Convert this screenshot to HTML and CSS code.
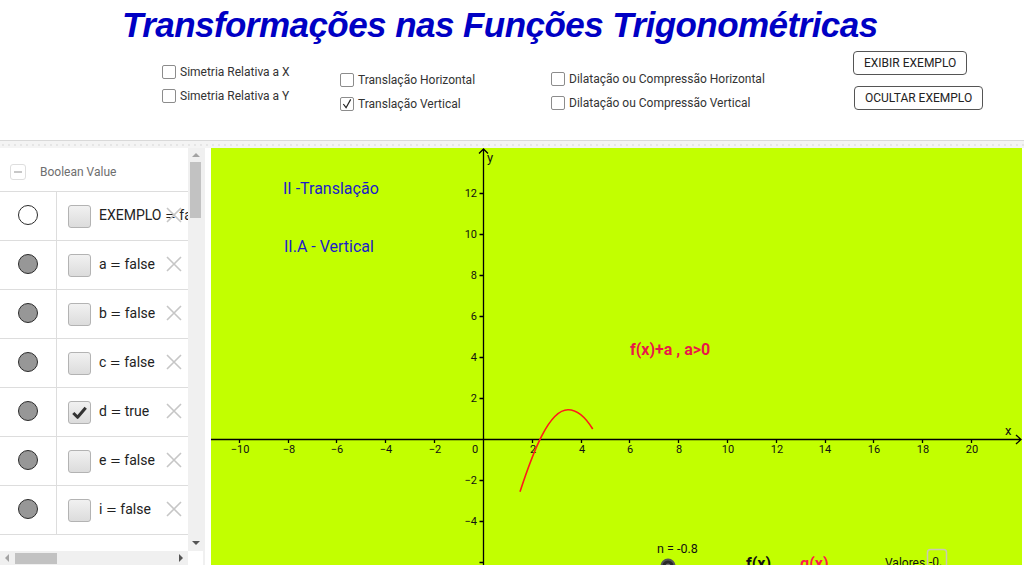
FILE: index.html
```html
<!DOCTYPE html>
<html lang="pt">
<head>
<meta charset="utf-8">
<title>Transformações nas Funções Trigonométricas</title>
<link rel="stylesheet" href="styles.css">
</head>
<body>
<div class="app">
  <header class="top">
    <h1 class="title">Transformações nas Funções Trigonométricas</h1>
    <div class="controls">
      <div class="col col1">
        <label class="cb"><span class="box"></span>Simetria Relativa a X</label>
        <label class="cb"><span class="box"></span>Simetria Relativa a Y</label>
      </div>
      <div class="col col2">
        <label class="cb"><span class="box"></span>Translação Horizontal</label>
        <label class="cb"><span class="box"><svg viewBox="0 0 13 13" class="tick"><path d="M2.5 6.5 L5.5 10.5 L10.5 1.5"/></svg></span>Translação Vertical</label>
      </div>
      <div class="col col3">
        <label class="cb"><span class="box"></span>Dilatação ou Compressão Horizontal</label>
        <label class="cb"><span class="box"></span>Dilatação ou Compressão Vertical</label>
      </div>
      <div class="col col4">
        <button class="btn">EXIBIR EXEMPLO</button>
        <button class="btn">OCULTAR EXEMPLO</button>
      </div>
    </div>
  </header>
  <div class="strip"></div>
  <main class="main">
    <aside class="algebra">
      <div class="av-body">
        <div class="av-list">
          <div class="av-head"><span class="collapse"></span><span class="av-title">Boolean Value</span></div>
          <div class="row"><div class="cell-dot"><span class="dot empty"></span></div><div class="cell-main"><span class="chk"></span><span class="lbl">EXEMPLO <span class="eq">=</span> false</span><svg class="del" viewBox="0 0 16 16"><path d="M1 1 L15 15 M15 1 L1 15"/></svg></div></div>
          <div class="row"><div class="cell-dot"><span class="dot"></span></div><div class="cell-main"><span class="chk"></span><span class="lbl">a <span class="eq">=</span> false</span><svg class="del" viewBox="0 0 16 16"><path d="M1 1 L15 15 M15 1 L1 15"/></svg></div></div>
          <div class="row"><div class="cell-dot"><span class="dot"></span></div><div class="cell-main"><span class="chk"></span><span class="lbl">b <span class="eq">=</span> false</span><svg class="del" viewBox="0 0 16 16"><path d="M1 1 L15 15 M15 1 L1 15"/></svg></div></div>
          <div class="row"><div class="cell-dot"><span class="dot"></span></div><div class="cell-main"><span class="chk"></span><span class="lbl">c <span class="eq">=</span> false</span><svg class="del" viewBox="0 0 16 16"><path d="M1 1 L15 15 M15 1 L1 15"/></svg></div></div>
          <div class="row"><div class="cell-dot"><span class="dot"></span></div><div class="cell-main"><span class="chk"><svg class="chk-mark" viewBox="0 0 22 22"><path d="M4.5 11.5 L9 16 L17.5 6"/></svg></span><span class="lbl">d <span class="eq">=</span> true</span><svg class="del" viewBox="0 0 16 16"><path d="M1 1 L15 15 M15 1 L1 15"/></svg></div></div>
          <div class="row"><div class="cell-dot"><span class="dot"></span></div><div class="cell-main"><span class="chk"></span><span class="lbl">e <span class="eq">=</span> false</span><svg class="del" viewBox="0 0 16 16"><path d="M1 1 L15 15 M15 1 L1 15"/></svg></div></div>
          <div class="row"><div class="cell-dot"><span class="dot"></span></div><div class="cell-main"><span class="chk"></span><span class="lbl">i <span class="eq">=</span> false</span><svg class="del" viewBox="0 0 16 16"><path d="M1 1 L15 15 M15 1 L1 15"/></svg></div></div>
        </div>
        <div class="vscroll"><span class="arr-up"></span><span class="vthumb"></span><span class="arr-down"></span></div>
      </div>
      <div class="hbar">
        <div class="hscroll"><span class="arr-left"></span><span class="hthumb"></span><span class="arr-right"></span></div>
        <div class="corner"></div>
      </div>
    </aside>
    <div class="splitter"></div>
    <section class="graphics">
      <svg class="plot" width="811" height="417" viewBox="211 148 811 417">
        <g class="axes">
          <path d="M211 439.5 H1021 M1016 435 L1021 439.5 L1016 444"/>
          <path d="M483.5 565 V149 M479 153.5 L483.5 149 L488 153.5"/>
          <path d="M239.5 439.5 V443 M288.5 439.5 V443 M336.5 439.5 V443 M385.5 439.5 V443 M434.5 439.5 V443 M532.5 439.5 V443 M581.5 439.5 V443 M629.5 439.5 V443 M678.5 439.5 V443 M727.5 439.5 V443 M776.5 439.5 V443 M825.5 439.5 V443 M873.5 439.5 V443 M922.5 439.5 V443 M971.5 439.5 V443"/>
          <path d="M479.5 193.5 H483.5 M479.5 234.5 H483.5 M479.5 275.5 H483.5 M479.5 316.5 H483.5 M479.5 357.5 H483.5 M479.5 398.5 H483.5 M479.5 480.5 H483.5 M479.5 521.5 H483.5 M479.5 562.5 H483.5"/>
        </g>
        <g class="xlab">
          <text x="240" y="453">−10</text>
          <text x="289" y="453">−8</text>
          <text x="337" y="453">−6</text>
          <text x="386" y="453">−4</text>
          <text x="435" y="453">−2</text>
          <text x="475" y="453">0</text>
          <text x="533" y="453">2</text>
          <text x="582" y="453">4</text>
          <text x="630" y="453">6</text>
          <text x="679" y="453">8</text>
          <text x="728" y="453">10</text>
          <text x="777" y="453">12</text>
          <text x="825" y="453">14</text>
          <text x="874" y="453">16</text>
          <text x="923" y="453">18</text>
          <text x="972" y="453">20</text>
        </g>
        <g class="ylab">
          <text x="477" y="197">12</text>
          <text x="477" y="238">10</text>
          <text x="477" y="279">8</text>
          <text x="477" y="320">6</text>
          <text x="477" y="361">4</text>
          <text x="477" y="402">2</text>
          <text x="477" y="484">−2</text>
          <text x="477" y="525">−4</text>
        </g>
        <text class="axname" x="487" y="162">y</text>
        <text class="axname" x="1005" y="435">x</text>
        <path class="curve" d="M520 491.7 C533 452 549 409.7 568 409.7 C578 409.7 586 418 592.7 429"/>
        <text class="note" x="283" y="194">II -Translação</text>
        <text class="note" x="284" y="252">II.A - Vertical</text>
        <text class="red-note" x="630" y="355">f(x)+a , a&gt;0</text>
        <text class="small" x="657" y="553">n = -0.8</text>
        <circle cx="668" cy="566" r="6.5" fill="#2a2a2a" stroke="#555" stroke-width="2"/>
        <circle cx="668" cy="566" r="2.5" fill="#777"/>
        <text class="fx" x="746" y="569">f(x)</text>
        <text class="gx" x="800" y="569">g(x)</text>
        <text class="small vl" x="885" y="567">Valores</text>
        <rect x="927.5" y="549.5" width="19" height="22" rx="3" fill="none" stroke="#c9c9b4" stroke-width="1.5"/>
        <text class="small vl" x="929" y="566">-0.</text>
      </svg>
    </section>
  </main>
</div>
</body>
</html>
```

FILE: styles.css
```css
* { box-sizing: border-box; }
html, body { margin: 0; padding: 0; background: #ffffff; }
body { width: 1024px; height: 568px; overflow: hidden; font-family: Roboto, "Liberation Sans", sans-serif; }

.top { height: 141px; border-bottom: 1px solid #d9d9d9; }
.title {
  margin: 0;
  height: 50px;
  padding-left: 122px;
  font-family: "Liberation Sans", Arial, sans-serif;
  font-style: italic;
  font-weight: bold;
  font-size: 35px;
  letter-spacing: -0.55px;
  line-height: 50px;
  color: #0000c4;
  white-space: nowrap;
}
.controls { display: flex; padding-left: 162px; height: 90px; }
.col { display: flex; flex-direction: column; }
.col1 { width: 178px; padding-top: 10px; }
.col2 { width: 211px; padding-top: 18px; }
.col3 { width: 302px; padding-top: 17px; }
.col4 { padding-top: 1px; gap: 11px; align-items: flex-start; }
.cb { display: flex; align-items: center; height: 24px; gap: 4px; font-size: 12px; color: #333; white-space: nowrap; }
.box { width: 14px; height: 14px; border: 1px solid #8c8c8c; border-radius: 2px; background: #fff; display: flex; align-items: center; justify-content: center; }
.tick { width: 12px; height: 12px; fill: none; stroke: #222; stroke-width: 1.3; }
.btn {
  height: 24px; padding: 0 10px; background: #fff; border: 1.5px solid #555; border-radius: 4px;
  font-family: Roboto, sans-serif; font-size: 12px; color: #222;
}
.col4 .btn:last-child { margin-left: 1px; }

.strip {
  height: 7px;
  background-color: #f4f4f4;
  background-image: radial-gradient(circle, #dedede 0.6px, transparent 0.9px);
  background-size: 6px 6px;
  background-position: 0 1px;
}

.main { display: flex; height: 417px; }
.algebra { width: 203px; display: flex; flex-direction: column; }
.av-body { display: flex; height: 403px; }
.av-list { width: 188px; overflow: hidden; }
.av-head { height: 44px; border-bottom: 1px solid #dddddd; display: flex; align-items: center; padding-left: 10px; padding-top: 4px; }
.collapse { width: 16px; height: 16px; border: 1px solid #dedede; border-radius: 3px; display: flex; align-items: center; justify-content: center; }
.collapse::after { content: ""; width: 8px; height: 2px; background: #c8c8c8; }
.av-title { margin-left: 14px; font-size: 12px; color: #6e6e6e; }

.row { height: 49px; border-bottom: 1px solid #dddddd; display: flex; }
.cell-dot { width: 57px; border-right: 1px solid #dddddd; display: flex; align-items: center; justify-content: center; padding-right: 1px; padding-bottom: 2px; }
.dot { width: 20px; height: 20px; border-radius: 50%; background: #979797; border: 1px solid #2b2b2b; }
.dot.empty { background: #fff; }
.cell-main { display: flex; align-items: center; padding-left: 11px; }
.chk { width: 23px; height: 23px; flex: none; border: 1px solid #b3b3b3; border-radius: 3px; background: linear-gradient(#f1f1f1, #dcdcdc); display: flex; align-items: center; justify-content: center; }
.chk-mark { width: 21px; height: 21px; fill: none; stroke: #333; stroke-width: 3.2; stroke-linejoin: round; }
.lbl { margin-left: 8px; width: 67px; flex: none; white-space: nowrap; font-size: 14px; color: #222; padding-bottom: 2px; }
.eq { font-family: "DejaVu Sans", sans-serif; font-size: 13px; }
.del { width: 16px; height: 16px; flex: none; fill: none; stroke: #c6c6c6; stroke-width: 1.6; margin-bottom: 3px; }

.vscroll { width: 15px; background: #f0f0f0; display: flex; flex-direction: column; align-items: center; }
.arr-up { margin-top: 5px; width: 0; height: 0; border-left: 4px solid transparent; border-right: 4px solid transparent; border-bottom: 4px solid #a3a3a3; }
.vthumb { margin-top: 5px; width: 11px; height: 56px; background: #c2c2c2; }
.arr-down { margin-top: auto; margin-bottom: 6px; width: 0; height: 0; border-left: 4px solid transparent; border-right: 4px solid transparent; border-top: 4px solid #555; }

.hbar { display: flex; height: 14px; }
.hscroll { width: 188px; background: #f0f0f0; display: flex; align-items: center; padding: 0 5px; }
.arr-left { width: 0; height: 0; border-top: 4px solid transparent; border-bottom: 4px solid transparent; border-right: 4px solid #a3a3a3; }
.hthumb { margin-left: 6px; width: 42px; height: 11px; background: #c2c2c2; }
.arr-right { margin-left: auto; width: 0; height: 0; border-top: 4px solid transparent; border-bottom: 4px solid transparent; border-left: 4px solid #555; }
.corner { width: 15px; background: #fff; }

.splitter { width: 8px; border-left: 2px solid #f0f0f0; background: #fff; }
.graphics { width: 811px; background: #c2ff00; }
.plot { display: block; }
.axes path { fill: none; stroke: #000; stroke-width: 1.3; }
.xlab text { font-family: Roboto, sans-serif; font-size: 11px; fill: #111; text-anchor: middle; }
.ylab text { font-family: Roboto, sans-serif; font-size: 11px; fill: #111; text-anchor: end; }
.axname { font-family: Roboto, sans-serif; font-size: 13px; fill: #111; }
.curve { fill: none; stroke: #ff1a1a; stroke-width: 1.6; }
.note { font-family: Roboto, sans-serif; font-size: 16px; fill: #1c1cc8; }
.red-note { font-family: Roboto, sans-serif; font-size: 16px; font-weight: bold; fill: #ea1848; }
.small { font-family: Roboto, sans-serif; font-size: 12.5px; fill: #111; }
.small.vl { font-size: 12px; }
.fx { font-family: Roboto, sans-serif; font-size: 16px; font-weight: bold; fill: #111; }
.gx { font-family: Roboto, sans-serif; font-size: 16px; font-weight: bold; fill: #ff1a4a; }
```
